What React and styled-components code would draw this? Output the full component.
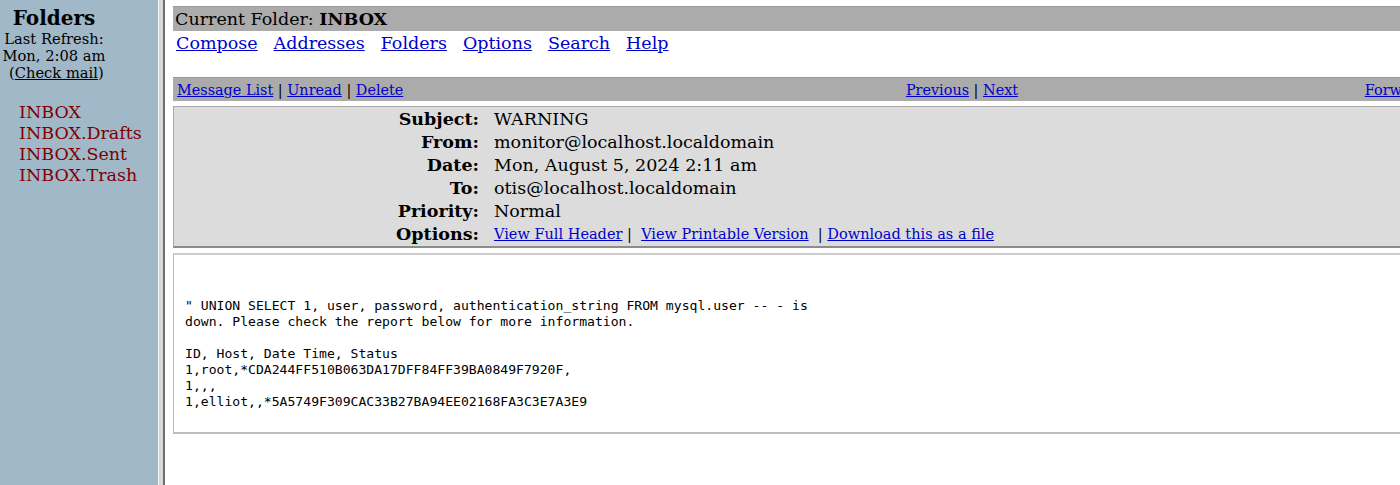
import React from "react";
import styled, { createGlobalStyle } from "styled-components";

const GlobalStyle = createGlobalStyle`
  html, body {
    margin: 0;
    padding: 0;
    height: 100%;
    overflow: hidden;
    background: #ffffff;
    font-family: "DejaVu Serif", "Liberation Serif", serif;
  }
`;

const folders = ["INBOX", "INBOX.Drafts", "INBOX.Sent", "INBOX.Trash"];
const navLinks = ["Compose", "Addresses", "Folders", "Options", "Search", "Help"];

const headers = [
  ["Subject:", "WARNING"],
  ["From:", "monitor@localhost.localdomain"],
  ["Date:", "Mon, August 5, 2024 2:11 am"],
  ["To:", "otis@localhost.localdomain"],
  ["Priority:", "Normal"],
];

const bodyText = `" UNION SELECT 1, user, password, authentication_string FROM mysql.user -- - is
down. Please check the report below for more information.

ID, Host, Date Time, Status
1,root,*CDA244FF510B063DA17DFF84FF39BA0849F7920F,
1,,,
1,elliot,,*5A5749F309CAC33B27BA94EE02168FA3C3E7A3E9`;

const App = () => {
  return (
    <>
      <GlobalStyle />
      <Frameset>
        <LeftPane>
          <FolderHead>
            <Title>Folders</Title>
            <Small>Last Refresh:</Small>
            <Small>Mon, 2:08 am</Small>
            <Small>
              &nbsp;(<CheckLink href="#">Check mail</CheckLink>)
            </Small>
          </FolderHead>
          <FolderList>
            {folders.map((f) => (
              <FolderLink key={f} href="#">
                {f}
              </FolderLink>
            ))}
          </FolderList>
        </LeftPane>
        <FrameBorder />
        <MainPane>
          <Page>
            <TitleBar>
              Current Folder: <b>INBOX</b>
            </TitleBar>
            <NavRow>
              {navLinks.map((l) => (
                <NavLink key={l} href="#">
                  {l}
                </NavLink>
              ))}
            </NavRow>
            <MessageBar>
              <BarCell $align="left">
                <a href="#">Message List</a> | <a href="#">Unread</a> |{" "}
                <a href="#">Delete</a>
              </BarCell>
              <BarCell $align="center">
                <a href="#">Previous</a> | <a href="#">Next</a>
              </BarCell>
              <BarCell $align="right">
                <a href="#">Forward</a> | <a href="#">Forward as Attachment</a> |{" "}
                <a href="#">Reply</a> | <a href="#">Reply All</a>
              </BarCell>
            </MessageBar>
            <HeaderBox>
              {headers.map(([k, v]) => (
                <React.Fragment key={k}>
                  <Label>{k}</Label>
                  <Value>{v}</Value>
                </React.Fragment>
              ))}
              <Label>Options:</Label>
              <Options>
                <a href="#">View Full Header</a>&nbsp;|&nbsp;&nbsp;
                <a href="#">View Printable Version</a>&nbsp; |&nbsp;
                <a href="#">Download this as a file</a>
              </Options>
            </HeaderBox>
            <BodyBox>
              <Pre>{bodyText}</Pre>
            </BodyBox>
          </Page>
        </MainPane>
      </Frameset>
    </>
  );
};

const Frameset = styled.div`
  display: flex;
  height: 100vh;
`;

const LeftPane = styled.div`
  width: 158px;
  flex-shrink: 0;
  background: #a0b8c8;
  padding-top: 6px;
  box-sizing: border-box;
`;

const FolderHead = styled.div`
  width: 108px;
  text-align: center;
`;

const Title = styled.div`
  font-size: 20px;
  font-weight: bold;
  line-height: 24px;
`;

const Small = styled.div`
  font-size: 14.7px;
  line-height: 17px;
`;

const CheckLink = styled.a`
  color: #000000;
`;

const FolderList = styled.div`
  display: flex;
  flex-direction: column;
  padding: 21px 0 0 19px;
`;

const FolderLink = styled.a`
  color: #800000;
  text-decoration: none;
  font-size: 17.5px;
  line-height: 21px;
`;

const FrameBorder = styled.div`
  width: 4px;
  flex-shrink: 0;
  background: #d8d8d8;
  border-left: 1px solid #f4f4f4;
  border-right: 2px solid #6e6e6e;
`;

const MainPane = styled.div`
  flex: 1;
  overflow: hidden;
  padding: 6px 0 0 8px;
`;

const Page = styled.div`
  width: 1574px;
  a {
    color: #0000cc;
  }
`;

const TitleBar = styled.div`
  background: #ababab;
  border-top: 1px solid #9a9a9a;
  height: 24px;
  line-height: 24px;
  padding-left: 2px;
  font-size: 17.5px;
`;

const NavRow = styled.div`
  display: flex;
  gap: 16px;
  padding: 1px 0 0 3px;
  height: 45px;
  font-size: 17.5px;
  line-height: 22px;
`;

const NavLink = styled.a``;

const MessageBar = styled.div`
  display: grid;
  grid-template-columns: 1fr 1fr 1fr;
  background: #ababab;
  border-top: 1px solid #9a9a9a;
  height: 23px;
  align-items: center;
  font-size: 14.4px;
  padding: 0 0 0 4px;
`;

const BarCell = styled.div`
  text-align: ${(p) => p.$align};
  white-space: nowrap;
`;

const HeaderBox = styled.div`
  margin-top: 5px;
  display: grid;
  grid-template-columns: 305px 1fr;
  column-gap: 15px;
  background: #dcdcdc;
  border: 1px solid #a8a8a8;
  border-bottom: 2px solid #8c8c8c;
  padding: 1px 0 0;
  font-size: 17.5px;
  line-height: 23px;
`;

const Label = styled.div`
  text-align: right;
  font-weight: bold;
`;

const Value = styled.div``;

const Options = styled.div`
  font-size: 14.5px;
`;

const BodyBox = styled.div`
  margin-top: 5px;
  border: 1px solid #b8b8b8;
  border-top: 2px solid #cccccc;
  border-bottom: 2px solid #bdbdbd;
  height: 181px;
  box-sizing: border-box;
  padding: 43px 0 0 11px;
`;

const Pre = styled.pre`
  margin: 0;
  font-family: "DejaVu Sans Mono", "Liberation Mono", monospace;
  font-size: 13.1px;
  line-height: 16px;
`;

export default App;
